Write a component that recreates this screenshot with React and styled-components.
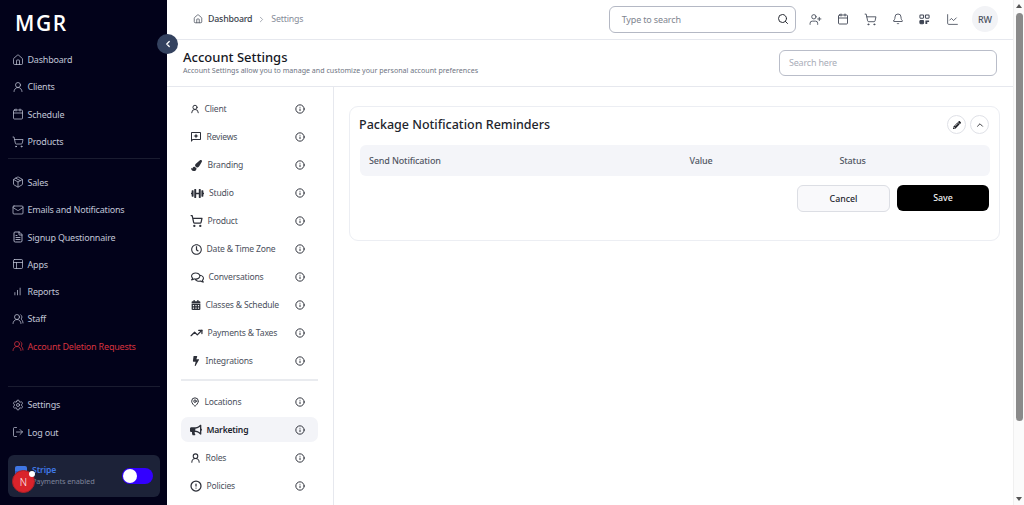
import React from "react";
import styled, { createGlobalStyle } from "styled-components";
import {
  House, UserRound, Calendar, ShoppingCart, Package, Mail, FileText, PanelsTopLeft,
  ChartNoAxesColumnIncreasing, UsersRound, Settings, LogOut, ChevronLeft, ChevronRight, ChevronUp,
  Search, UserPlus, Bell, ChartLine, Info, MapPin, TrendingUp, CircleAlert,
} from "lucide-react";
import {
  FaPaintBrush, FaDumbbell, FaRegClock, FaRegComments, FaCalendarAlt, FaBolt, FaBullhorn, FaPencilAlt,
} from "react-icons/fa";
import { MdOutlineReviews } from "react-icons/md";

const Global = createGlobalStyle`
  html, body { margin: 0; height: 100%; overflow: hidden; background: #fff; }
  * { box-sizing: border-box; }
  body { font-family: "Noto Sans", "Open Sans", sans-serif; }
`;

const Page = styled.div`
  display: grid;
  grid-template-columns: 167px 1fr 11px;
  width: 1024px;
  height: 505px;
`;

const Sidebar = styled.aside`
  position: relative;
  display: flex;
  flex-direction: column;
  background: #02021a;
  padding: 0 8px;
  height: 505px;
`;
const Logo = styled.div`
  font-family: "Open Sans", sans-serif;
  font-weight: 600;
  font-size: 21px;
  letter-spacing: 1.6px;
  color: #fff;
  height: 46px;
  padding: 8px 0 0 7px;
  line-height: 30px;
`;
const NavGroup = styled.nav`
  display: flex;
  flex-direction: column;
`;
const NavItem = styled.div`
  display: flex;
  align-items: center;
  gap: 4px;
  height: 27.3px;
  padding-left: 3.5px;
  font-size: 9px;
  letter-spacing: -0.2px;
  color: ${(p) => (p.$danger ? "#d6323f" : "#c0c4d6")};
  svg { flex: none; }
`;
const NavGlyph = styled.span`
  display: flex;
  align-items: center;
  justify-content: center;
  width: 12px;
  flex: none;
`;
const SideRule = styled.hr`
  border: 0;
  border-top: 1px solid #1a1c30;
  margin: ${(p) => p.$m};
  width: 152px;
`;
const SideSpacer = styled.div`flex: 1;`;
const StripeCard = styled.div`
  position: relative;
  display: flex;
  align-items: center;
  height: 42px;
  margin-bottom: 8px;
  padding: 0 7px;
  width: 152px;
  background: #1c2238;
  border-radius: 6px;
`;
const StripeLogo = styled.div`
  width: 12px;
  height: 13px;
  margin-top: -8px;
  border-radius: 2px;
  background: linear-gradient(#3f76e4 0 35%, #2f5cc4 35%);
  flex: none;
`;
const StripeText = styled.div`
  margin-left: 5px;
  display: flex;
  flex-direction: column;
  line-height: 11px;
  flex: 1;
`;
const StripeName = styled.span`color: #3f78e6; font-weight: 600; font-size: 8.6px; letter-spacing: -0.1px;`;
const StripeStatus = styled.span`color: #7d8398; font-size: 7.4px; letter-spacing: -0.1px;`;
const Toggle = styled.div`
  display: flex;
  align-items: center;
  width: 31px;
  height: 16px;
  padding-left: 1px;
  border-radius: 8px;
  background: #3300ff;
  flex: none;
`;
const Knob = styled.div`
  width: 14px;
  height: 14px;
  border-radius: 50%;
  background: #fff;
`;
const Badge = styled.div`
  position: absolute;
  left: 4px;
  top: 15px;
  width: 23px;
  height: 23px;
  border-radius: 50%;
  background: #d9232b;
  border: 1px solid #a92026;
  color: #fff;
  font-size: 10px;
  font-weight: 300;
  display: flex;
  align-items: center;
  justify-content: center;
`;
const BadgeDot = styled.div`
  position: absolute;
  left: 21px;
  top: 16px;
  width: 6px;
  height: 6px;
  border-radius: 50%;
  background: #fff;
`;
const Collapse = styled.button`
  position: absolute;
  left: 157px;
  top: 34px;
  width: 21px;
  height: 20px;
  padding: 0;
  border: 0;
  border-radius: 50%;
  background: #34425f;
  color: #fff;
  display: flex;
  align-items: center;
  justify-content: center;
  z-index: 2;
`;

const Main = styled.main`
  display: flex;
  flex-direction: column;
  min-width: 0;
  height: 505px;
`;
const TopBar = styled.header`
  display: flex;
  align-items: center;
  height: 40px;
  padding: 0 15px 1px 26px;
  border-bottom: 1px solid #e6e8ee;
`;
const Crumbs = styled.div`
  display: flex;
  align-items: center;
  font-size: 8.8px;
  letter-spacing: -0.2px;
  flex: 1;
`;
const CrumbStrong = styled.span`color: #3a3f4c; font-weight: 500; margin-left: 5px;`;
const CrumbSep = styled.span`color: #8b909c; margin: 0 5px; display: flex;`;
const CrumbDim = styled.span`color: #858b98;`;
const SearchBox = styled.div`
  display: flex;
  align-items: center;
  justify-content: space-between;
  width: 187px;
  height: 27px;
  padding: 0 6px 0 12px;
  border: 1px solid #b4b8c4;
  border-radius: 6px;
  font-size: 9px;
  letter-spacing: -0.15px;
  color: #80858f;
`;
const TopIcons = styled.div`
  display: flex;
  align-items: center;
  margin-left: 6px;
  color: #3f4554;
`;
const TopIcon = styled.span`
  display: flex;
  justify-content: center;
  width: 27.4px;
`;
const Avatar = styled.div`
  width: 26px;
  height: 26px;
  margin-left: 6px;
  border-radius: 50%;
  background: #f2f3f6;
  color: #4a5060;
  font-size: 9px;
  font-weight: 500;
  display: flex;
  align-items: center;
  justify-content: center;
`;
const TitleBand = styled.section`
  display: flex;
  align-items: center;
  justify-content: space-between;
  height: 47px;
  padding: 0 16px;
  border-bottom: 1px solid #e6e8ee;
`;
const TitleText = styled.div`
  display: flex;
  flex-direction: column;
  margin-top: -2px;
`;
const PageTitle = styled.h1`
  margin: 0;
  font-size: 13px;
  font-weight: 500;
  line-height: 15px;
  color: #16181f;
`;
const PageSub = styled.p`
  margin: 0;
  font-size: 7.1px;
  line-height: 10px;
  color: #6e7482;
`;
const BandSearch = styled.div`
  display: flex;
  align-items: center;
  width: 218px;
  height: 26px;
  padding: 0 9px 2px;
  border: 1px solid #b9bdc9;
  border-radius: 6px;
  font-size: 9px;
  letter-spacing: -0.2px;
  color: #a9adb8;
`;
const Body = styled.div`
  display: flex;
  flex: 1;
  min-height: 0;
`;
const SettingsNav = styled.div`
  width: 167px;
  padding: 8px 15px 0 14px;
  border-right: 1px solid #e6e8ee;
  display: flex;
  flex-direction: column;
`;
const SetRow = styled.div`
  display: flex;
  align-items: center;
  height: 25px;
  margin: 1.5px 0;
  flex: none;
  padding: 0 13px 0 9px;
  border-radius: 7px;
  background: ${(p) => (p.$active ? "#f3f4f8" : "transparent")};
  color: ${(p) => (p.$active ? "#22252e" : "#4b505c")};
  font-weight: ${(p) => (p.$active ? 600 : 400)};
  font-size: 8.6px;
  letter-spacing: -0.2px;
`;
const SetIcon = styled.span`
  display: flex;
  align-items: center;
  justify-content: center;
  flex: none;
  width: ${(p) => p.$w}px;
  color: #2c2f38;
`;
const SetLabel = styled.span`flex: 1; margin-left: 4.5px;`;
const InfoMark = styled.span`
  display: flex;
  color: #33363f;
`;
const SetRule = styled.hr`
  border: 0;
  border-top: 2px solid #e9ebef;
  margin: 4px 0 6.5px;
  width: 100%;
`;
const Content = styled.div`
  flex: 1;
  padding: 19px 13px 0 15px;
`;
const Card = styled.section`
  height: 135px;
  padding: 0 9px 0 10px;
  border: 1px solid #eceef3;
  border-radius: 9px;
`;
const CardHead = styled.div`
  display: flex;
  align-items: center;
  justify-content: space-between;
  height: 38px;
  padding-bottom: 4px;
`;
const CardTitle = styled.h2`
  margin: 0 0 0 -1px;
  font-size: 12.5px;
  font-weight: 500;
  color: #22252d;
`;
const CardTools = styled.div`
  display: flex;
  gap: 4px;
  margin: 1px 1px 0 0;
`;
const RoundBtn = styled.button`
  width: 19px;
  height: 19px;
  padding: 0;
  border: 1px solid #dfe1e7;
  border-radius: 50%;
  background: #fff;
  color: #1a1c22;
  display: flex;
  align-items: center;
  justify-content: center;
`;
const TableHead = styled.div`
  display: grid;
  grid-template-columns: 320.5px 150px 1fr;
  align-items: center;
  height: 31px;
  padding-left: 9px;
  border-radius: 6px;
  background: #f4f5f9;
  font-size: 9px;
  letter-spacing: -0.15px;
  font-weight: 500;
  color: #525764;
`;
const Actions = styled.div`
  display: flex;
  justify-content: flex-end;
  gap: 7px;
  margin: 9px 1px 0 0;
`;
const CancelBtn = styled.button`
  width: 93px;
  height: 27px;
  border: 1px solid #dcdee4;
  border-radius: 6px;
  background: #f9f9fb;
  color: #23262d;
  font: 500 8.8px "Noto Sans", sans-serif;
`;
const SaveBtn = styled.button`
  width: 92px;
  height: 26px;
  border: 0;
  border-radius: 6px;
  background: #000;
  color: #f2f2f2;
  font: 500 8.8px "Noto Sans", sans-serif;
`;

const Scrollbar = styled.div`
  display: flex;
  flex-direction: column;
  align-items: center;
  height: 505px;
  background: #fbfbfb;
  border-left: 1px solid #f0f0f0;
`;
const ScrollArrow = styled.div`
  width: 0;
  height: 0;
  margin: 4px 0;
  border-left: 3.5px solid transparent;
  border-right: 3.5px solid transparent;
  ${(p) => (p.$down ? "border-top: 4px solid #555;" : "border-bottom: 4px solid #555;")}
`;
const ScrollThumb = styled.div`
  width: 7px;
  height: 408px;
  margin-top: 1px;
  border-radius: 4px;
  background: #8a8a8a;
`;
const ScrollGap = styled.div`flex: 1;`;

const QrGlyph = () => (
  <svg width="11" height="11" viewBox="0 0 12 12" fill="none" stroke="currentColor" strokeWidth="1.1">
    <rect x="1" y="1.2" width="4" height="3.4" rx="0.7" />
    <rect x="7" y="1.2" width="4" height="3.4" rx="0.7" />
    <rect x="1" y="7.2" width="4" height="3.4" rx="0.7" fill="currentColor" />
    <path d="M7 7.2h4v1.6H9v2H7z" fill="currentColor" stroke="none" />
  </svg>
);

const S = 12;
const primary = [
  [<House size={S} strokeWidth={1.5} />, "Dashboard"],
  [<UserRound size={S} strokeWidth={1.5} />, "Clients"],
  [<Calendar size={S} strokeWidth={1.5} />, "Schedule"],
  [<ShoppingCart size={S} strokeWidth={1.5} />, "Products"],
];
const secondary = [
  [<Package size={S} strokeWidth={1.5} />, "Sales"],
  [<Mail size={S} strokeWidth={1.5} />, "Emails and Notifications"],
  [<FileText size={S} strokeWidth={1.7} />, "Signup Questionnaire"],
  [<PanelsTopLeft size={S} strokeWidth={1.5} />, "Apps"],
  [<ChartNoAxesColumnIncreasing size={9} strokeWidth={2} />, "Reports"],
  [<UsersRound size={S} strokeWidth={1.5} />, "Staff"],
];
const strong = { size: 14, strokeWidth: 2.3 };
const settingsA = [
  [<UserRound {...strong} />, "Client", 10],
  [<MdOutlineReviews size={14} />, "Reviews", 12],
  [<FaPaintBrush size={11} />, "Branding", 13],
  [<FaDumbbell size={13} />, "Studio", 14.5],
  [<ShoppingCart {...strong} />, "Product", 13],
  [<FaRegClock size={11} />, "Date & Time Zone", 12],
  [<FaRegComments size={13} />, "Conversations", 14],
  [<FaCalendarAlt size={10} />, "Classes & Schedule", 11],
  [<TrendingUp {...strong} />, "Payments & Taxes", 13],
  [<FaBolt size={10} />, "Integrations", 11],
];
const settingsB = [
  [<MapPin {...strong} />, "Locations", 10],
  [<FaBullhorn size={12} />, "Marketing", 12, true],
  [<UserRound {...strong} />, "Roles", 11],
  [<CircleAlert size={12} strokeWidth={2.5} />, "Policies", 12],
];

const SettingRow = ({ icon, label, w, active }) => (
  <SetRow $active={active}>
    <SetIcon $w={w}>{icon}</SetIcon>
    <SetLabel>{label}</SetLabel>
    <InfoMark><Info size={10} strokeWidth={2.4} /></InfoMark>
  </SetRow>
);

const Item = ({ icon, label, danger }) => (
  <NavItem $danger={danger}><NavGlyph>{icon}</NavGlyph>{label}</NavItem>
);

export default function App() {
  return (
    <Page>
      <Global />
      <Sidebar>
        <Logo>MGR</Logo>
        <Collapse><ChevronLeft size={10} strokeWidth={3} /></Collapse>
        <NavGroup>
          {primary.map(([icon, t]) => <Item key={t} icon={icon} label={t} />)}
        </NavGroup>
        <SideRule $m="3px 0 9.6px" />
        <NavGroup>
          {secondary.map(([icon, t]) => <Item key={t} icon={icon} label={t} />)}
          <Item danger icon={<UsersRound size={S} strokeWidth={1.5} />} label="Account Deletion Requests" />
        </NavGroup>
        <SideRule $m="26.4px 0 4px" />
        <NavGroup>
          <Item icon={<Settings size={S} strokeWidth={1.5} />} label="Settings" />
          <Item icon={<LogOut size={S} strokeWidth={1.5} />} label="Log out" />
        </NavGroup>
        <SideSpacer />
        <StripeCard>
          <StripeLogo />
          <StripeText>
            <StripeName>Stripe</StripeName>
            <StripeStatus>Payments enabled</StripeStatus>
          </StripeText>
          <Toggle><Knob /></Toggle>
          <Badge>N</Badge>
          <BadgeDot />
        </StripeCard>
      </Sidebar>
      <Main>
        <TopBar>
          <Crumbs>
            <House size={10} color="#555b68" />
            <CrumbStrong>Dashboard</CrumbStrong>
            <CrumbSep><ChevronRight size={9} /></CrumbSep>
            <CrumbDim>Settings</CrumbDim>
          </Crumbs>
          <SearchBox>Type to search<Search size={12} color="#2a2d35" /></SearchBox>
          <TopIcons>
            <TopIcon><UserPlus size={13} strokeWidth={1.6} /></TopIcon>
            <TopIcon><Calendar size={12} strokeWidth={1.8} /></TopIcon>
            <TopIcon><ShoppingCart size={13} strokeWidth={1.6} /></TopIcon>
            <TopIcon><Bell size={12} strokeWidth={1.7} /></TopIcon>
            <TopIcon><QrGlyph /></TopIcon>
            <TopIcon><ChartLine size={13} strokeWidth={1.5} /></TopIcon>
          </TopIcons>
          <Avatar>RW</Avatar>
        </TopBar>
        <TitleBand>
          <TitleText>
            <PageTitle>Account Settings</PageTitle>
            <PageSub>Account Settings allow you to manage and customize your personal account preferences</PageSub>
          </TitleText>
          <BandSearch>Search here</BandSearch>
        </TitleBand>
        <Body>
          <SettingsNav>
            {settingsA.map(([icon, t, w]) => <SettingRow key={t} icon={icon} label={t} w={w} />)}
            <SetRule />
            {settingsB.map(([icon, t, w, a]) => <SettingRow key={t} icon={icon} label={t} w={w} active={a} />)}
          </SettingsNav>
          <Content>
            <Card>
              <CardHead>
                <CardTitle>Package Notification Reminders</CardTitle>
                <CardTools>
                  <RoundBtn><FaPencilAlt size={8} /></RoundBtn>
                  <RoundBtn><ChevronUp size={10} strokeWidth={2} /></RoundBtn>
                </CardTools>
              </CardHead>
              <TableHead>
                <span>Send Notification</span>
                <span>Value</span>
                <span>Status</span>
              </TableHead>
              <Actions>
                <CancelBtn>Cancel</CancelBtn>
                <SaveBtn>Save</SaveBtn>
              </Actions>
            </Card>
          </Content>
        </Body>
      </Main>
      <Scrollbar>
        <ScrollArrow />
        <ScrollThumb />
        <ScrollGap />
        <ScrollArrow $down />
      </Scrollbar>
    </Page>
  );
}
